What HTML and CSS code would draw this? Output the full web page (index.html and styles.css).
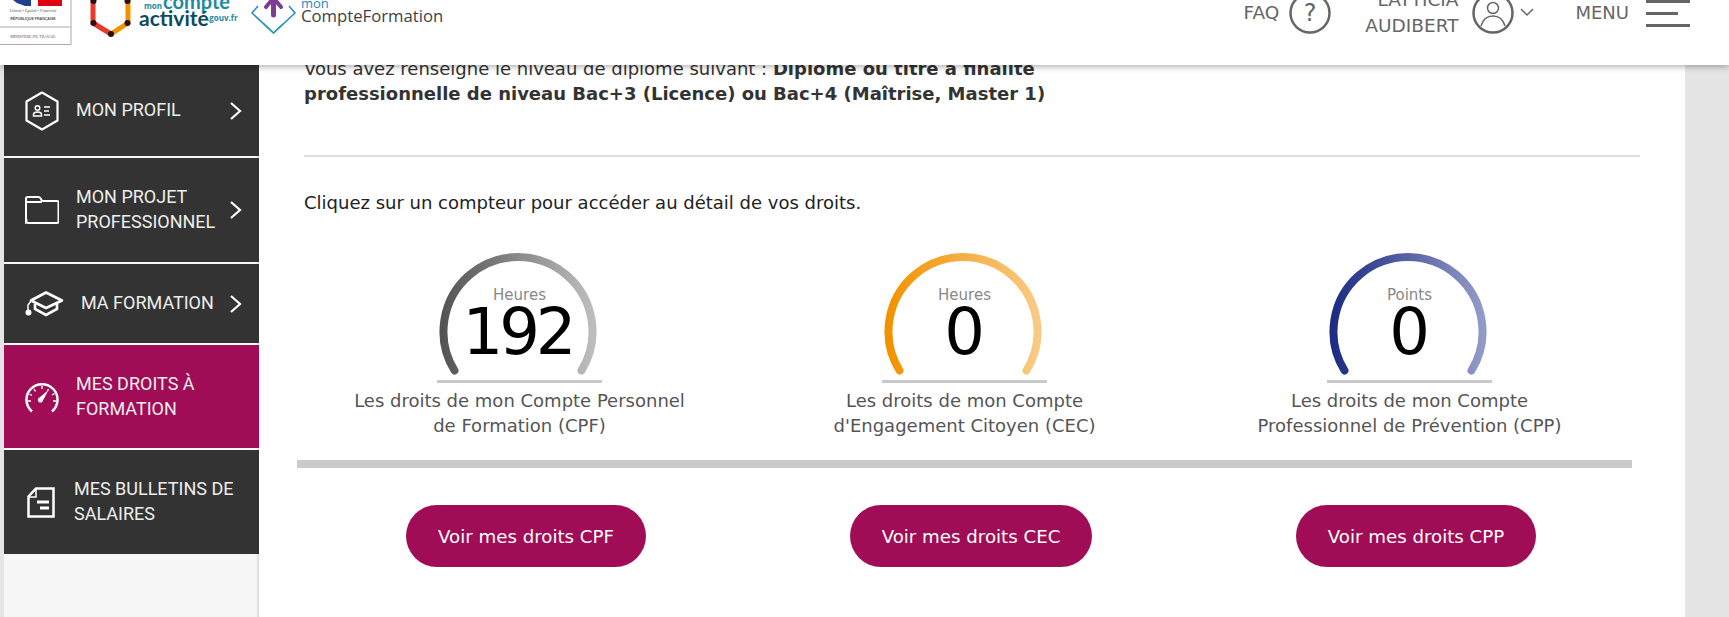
FILE: index.html
```html
<!DOCTYPE html>
<html lang="fr">
	<head>
		<title>Mes droits à formation</title>
		<link rel="stylesheet" href="styles.css">
	</head>
	<body>
		<header class="top-bar">
			<svg class="logo-strip" width="480" height="65" viewBox="0 0 480 65">
				<path d="M5 0h26v6h-26z" fill="#1f3f8f"/>
				<path d="M5 0h8l4 3 8 3h-20z" fill="#fff"/>
				<path d="M38 0h24v6h-24z" fill="#e1000f"/>
				<path d="M0 27h71M71 0v44.500M0 44.500h71" stroke="#aaa" fill="none"/>
				<text x="33" y="12" class="tiny tiny-italic">Liberté • Égalité • Fraternité</text>
				<text x="33" y="20" class="tiny tiny-bold">RÉPUBLIQUE FRANÇAISE</text>
				<text x="33" y="38" class="tiny">MINISTÈRE DU TRAVAIL</text>

				<path d="M93 0v23l18 11" fill="none" stroke="#e8392b" stroke-width="5"/>
				<path d="M111 34l17-11v-23" fill="none" stroke="#f39200" stroke-width="5"/>
				<circle cx="93.500" cy="23" r="3" fill="#2a0f12"/>
				<circle cx="111" cy="34" r="3" fill="#2a0f12"/>
				<circle cx="127.500" cy="23" r="3" fill="#2a0f12"/>
				<circle cx="93.500" cy="1" r="3" fill="#2a0f12"/>
				<circle cx="127.500" cy="1" r="3" fill="#2a0f12"/>
				<text x="144" y="9" class="act-small">mon</text>
				<text x="163" y="9" class="act-big">compte</text>
				<text x="139" y="26" class="act-dark">activité</text>
				<text x="207" y="21" class="act-gouv">.gouv.fr</text>

				<path d="M258 6l-6 7 21.500 20 21.500-20-6-7" fill="none" stroke="#2a86c4" stroke-width="1.500"/>
				<path d="M264 24l9.500 9 9.500-9" fill="none" stroke="#1fa59b" stroke-width="1.500"/>
				<path d="M273.500 0v15" stroke="#7b3d91" stroke-width="5" stroke-linecap="round"/>
				<path d="M266 7l5-6M281 7l-5-6" stroke="#7b3d91" stroke-width="4" stroke-linecap="round"/>
				<text x="301" y="8" class="cf-mon">mon</text>
				<text x="301" y="22" class="cf-name">CompteFormation</text>
			</svg>

			<div class="top-actions">
				<span class="top-link faq-link">FAQ</span>
				<svg class="round-icon" width="42" height="42" viewBox="0 0 42 42">
					<circle cx="21" cy="21" r="19.500" fill="none" stroke="#666" stroke-width="2.500"/>
					<text x="21" y="29" class="help-mark">?</text>
				</svg>
				<span class="top-link user-name">LAYTICIA<br>AUDIBERT</span>
				<svg class="round-icon" width="42" height="42" viewBox="0 0 42 42">
					<circle cx="21" cy="21" r="19.500" fill="none" stroke="#666" stroke-width="2.500"/>
					<circle cx="21" cy="16" r="5.500" fill="none" stroke="#666" stroke-width="1.500"/>
					<path d="M9 34c2-7 7-10 12-10s10 3 12 10" fill="none" stroke="#666" stroke-width="1.500"/>
				</svg>
				<svg class="down-icon" width="16" height="10" viewBox="0 0 16 10">
					<path d="M2 2l6 6 6-6" fill="none" stroke="#666" stroke-width="1.500"/>
				</svg>
				<span class="top-link menu-link">MENU</span>
				<div class="burger">
					<span></span>
					<span class="short"></span>
					<span></span>
				</div>
			</div>
		</header>

		<div class="page">
			<nav class="sidebar">
				<a class="side-item item-profil">
					<span class="side-icon">
						<svg width="34" height="40" viewBox="0 0 34 40">
							<path d="M17 1.500l15.500 9v19l-15.500 9-15.500-9v-19z" fill="none" stroke="#fff" stroke-width="2.200" stroke-linejoin="round"/>
							<circle cx="12.500" cy="17" r="2.300" fill="none" stroke="#fff" stroke-width="1.500"/>
							<path d="M8.500 25v-1.500c0-1.500 2-2.500 4-2.500s4 1 4 2.500v1.500z" fill="none" stroke="#fff" stroke-width="1.500"/>
							<path d="M19 16h6M19 20h5M19 24h6" stroke="#fff" stroke-width="1.300"/>
						</svg>
					</span>
					<span class="side-text">MON PROFIL</span>
					<svg class="side-arrow" width="13" height="20" viewBox="0 0 13 20"><path d="M2 2l9 8-9 8" fill="none" stroke="#fff" stroke-width="2.200"/></svg>
				</a>
				<a class="side-item item-projet">
					<span class="side-icon">
						<svg width="34" height="28" viewBox="0 0 34 28">
							<path d="M1 26V2.500q0-1.500 1.500-1.500h11q1.500 0 2.500 2l1 2h15q1.500 0 1.500 1.500v19q0 1.500-1.500 1.500h-29q-1.500 0-1.500-1.500z M1 6h16" fill="none" stroke="#fff" stroke-width="2"/>
						</svg>
					</span>
					<span class="side-text">MON PROJET<br>PROFESSIONNEL</span>
					<svg class="side-arrow" width="13" height="20" viewBox="0 0 13 20"><path d="M2 2l9 8-9 8" fill="none" stroke="#fff" stroke-width="2.200"/></svg>
				</a>
				<a class="side-item item-formation">
					<span class="side-icon icon-wide">
						<svg width="40" height="26" viewBox="0 0 40 26">
							<path d="M21 1.500l16 8-16 7.500-15-7.500z" fill="none" stroke="#fff" stroke-width="2.600" stroke-linejoin="round"/>
							<path d="M10 13v5l11 6 11-6v-5" fill="none" stroke="#fff" stroke-width="2.600"/>
							<path d="M6 10L3 14v6" fill="none" stroke="#fff" stroke-width="1.500"/>
							<circle cx="3.500" cy="21.500" r="3" fill="#fff"/>
						</svg>
					</span>
					<span class="side-text">MA FORMATION</span>
					<svg class="side-arrow" width="13" height="20" viewBox="0 0 13 20"><path d="M2 2l9 8-9 8" fill="none" stroke="#fff" stroke-width="2.200"/></svg>
				</a>
				<a class="side-item item-droits active">
					<span class="side-icon">
						<svg width="34" height="32" viewBox="0 0 34 32">
							<path d="M7 30.500A15.500 15.500 0 1 1 27 30.500" fill="none" stroke="#fff" stroke-width="2.500"/>
							<path d="M17 5v3M9 8l1.500 2.500M4.500 13l2.500 1.500M3 20h3M28 20h3M27 14l2.500-1.500M23.500 8l-1 2" stroke="#fff" stroke-width="1.300"/>
							<path d="M14.500 16.500l9-7.500-5.500 10.500a2.600 2.600 0 1 1-3.500-3z" fill="#fff"/>
						</svg>
					</span>
					<span class="side-text">MES DROITS À<br>FORMATION</span>
				</a>
				<a class="side-item item-salaires">
					<span class="side-icon icon-narrow">
						<svg width="28" height="31" viewBox="0 0 28 31">
							<path d="M9 1.500h17.500v28h-25v-20z" fill="none" stroke="#fff" stroke-width="2.500"/>
							<path d="M9 2v8h-7" fill="none" stroke="#fff" stroke-width="1.500"/>
							<path d="M10 15h12M13 21h9" stroke="#fff" stroke-width="3"/>
						</svg>
					</span>
					<span class="side-text">MES BULLETINS DE<br>SALAIRES</span>
				</a>
			</nav>

			<main class="content">
				<p class="diploma">Vous avez renseigné le niveau de diplôme suivant : <strong>Diplôme ou titre à finalité<br>professionnelle de niveau Bac+3 (Licence) ou Bac+4 (Maîtrise, Master 1)</strong></p>
				<hr class="separator">
				<p class="intro">Cliquez sur un compteur pour accéder au détail de vos droits.</p>

				<div class="counters">
					<div class="counter">
						<div class="gauge">
							<svg class="gauge-arc" width="160" height="125" viewBox="0 0 160 125">
								<defs>
									<linearGradient id="grad-cpf"><stop offset="0" stop-color="#555"/><stop offset="1" stop-color="#bdbdbd"/></linearGradient>
								</defs>
								<path d="M16.500 119.500A74.500 74.500 0 1 1 143.500 119.500" fill="none" stroke="url(#grad-cpf)" stroke-width="8" stroke-linecap="round"/>
							</svg>
							<span class="gauge-unit">Heures</span>
							<span class="gauge-value">192</span>
						</div>
						<p class="counter-label">Les droits de mon Compte Personnel<br>de Formation (CPF)</p>
					</div>
					<div class="counter">
						<div class="gauge">
							<svg class="gauge-arc" width="160" height="125" viewBox="0 0 160 125">
								<defs>
									<linearGradient id="grad-cec"><stop offset="0" stop-color="#f39200"/><stop offset="1" stop-color="#f9ca85"/></linearGradient>
								</defs>
								<path d="M16.500 119.500A74.500 74.500 0 1 1 143.500 119.500" fill="none" stroke="url(#grad-cec)" stroke-width="8" stroke-linecap="round"/>
							</svg>
							<span class="gauge-unit">Heures</span>
							<span class="gauge-value">0</span>
						</div>
						<p class="counter-label">Les droits de mon Compte<br>d'Engagement Citoyen (CEC)</p>
					</div>
					<div class="counter">
						<div class="gauge">
							<svg class="gauge-arc" width="160" height="125" viewBox="0 0 160 125">
								<defs>
									<linearGradient id="grad-cpp"><stop offset="0" stop-color="#1d2d84"/><stop offset="1" stop-color="#929ac6"/></linearGradient>
								</defs>
								<path d="M16.500 119.500A74.500 74.500 0 1 1 143.500 119.500" fill="none" stroke="url(#grad-cpp)" stroke-width="8" stroke-linecap="round"/>
							</svg>
							<span class="gauge-unit">Points</span>
							<span class="gauge-value">0</span>
						</div>
						<p class="counter-label">Les droits de mon Compte<br>Professionnel de Prévention (CPP)</p>
					</div>
				</div>

				<div class="actions">
					<div class="action-cell"><a class="pill-button">Voir mes droits CPF</a></div>
					<div class="action-cell"><a class="pill-button">Voir mes droits CEC</a></div>
					<div class="action-cell"><a class="pill-button">Voir mes droits CPP</a></div>
				</div>
			</main>
		</div>
	</body>
</html>
```

FILE: styles.css
```css
html, body {
	margin: 0;
	height: 617px;
	overflow: hidden;
}
body {
	font-family: "DejaVu Sans", Verdana, sans-serif;
	background-color: #e5e5e5;
	color: #333;
}
.top-bar {
	position: relative;
	z-index: 2;
	height: 65px;
	background: white;
	box-shadow: 0px 2px 6px rgba(0, 0, 0, 0.3);
	display: flex;
	justify-content: space-between;
	overflow: hidden;
	clip-path: inset(0 0 -10px 0);
}
.logo-strip {
	display: block;
	flex: none;
}
	.tiny {
		font-family: "Liberation Serif", serif;
		font-size: 4px;
		fill: #555;
		text-anchor: middle;
	}
	.tiny-italic {
		font-style: italic;
	}
	.tiny-bold {
		font-family: "Liberation Sans", sans-serif;
		font-weight: bold;
		font-size: 3.6px;
	}
	.act-small {
		font-family: "Open Sans", sans-serif;
		font-size: 8px;
		font-weight: bold;
		fill: #1d8a9e;
	}
	.act-big {
		font-family: "Lato", sans-serif;
		font-size: 20px;
		font-weight: bold;
		fill: #1d8a9e;
	}
	.act-dark {
		font-family: "Lato", sans-serif;
		font-size: 21px;
		font-weight: bold;
		fill: #0c4a60;
	}
	.act-gouv {
		font-family: "Open Sans", sans-serif;
		font-size: 8px;
		font-weight: bold;
		fill: #1d8a9e;
	}
	.cf-mon {
		font-family: "Open Sans", sans-serif;
		font-size: 13px;
		fill: #2a86c4;
	}
	.cf-name {
		font-family: "Open Sans", sans-serif;
		font-size: 16.700px;
		fill: #3c4246;
	}
.top-actions {
	display: flex;
	align-items: flex-start;
	padding-right: 39px;
	color: #666;
	font-size: 18.500px;
	margin-top: -8px;
}
	.top-link {
		line-height: 26px;
	}
	.faq-link {
		margin-top: 8px;
	}
	.round-icon {
		display: block;
	}
	.top-actions .round-icon {
		margin-left: 10px;
	}
	.user-name {
		text-align: right;
		margin-left: 34px;
		margin-top: -5px;
	}
	.user-name + .round-icon {
		margin-left: 14px;
	}
	.down-icon {
		margin-left: 5px;
		margin-top: 15px;
	}
	.menu-link {
		margin-left: 40px;
		margin-top: 8px;
		font-size: 18px;
	}
	.burger {
		width: 44px;
		margin-left: 17px;
		display: flex;
		flex-direction: column;
		gap: 9px;
		margin-top: 8px;
	}
	.burger span {
		display: block;
		height: 3px;
		background-color: #666;
	}
	.burger .short {
		width: 32px;
	}
.page {
	display: flex;
	margin-left: 4px;
	width: 1681px;
	height: 552px;
}
.sidebar {
	width: 255px;
	flex: none;
	background-color: #f7f7f7;
	box-shadow: inset -3px 0px 3px -2px #ccc;
	display: flex;
	flex-direction: column;
	gap: 2px;
}
	.side-item {
		display: flex;
		align-items: center;
		flex: none;
		padding: 0 17px 0 21px;
		background-color: #333;
		color: #eee;
		font-family: Roboto, sans-serif;
		font-size: 18px;
		line-height: 25px;
	}
	.side-text {
		padding-bottom: 2px;
	}
	.item-profil {
		height: 91px;
	}
	.item-projet {
		height: 104px;
	}
	.item-formation {
		height: 79px;
	}
	.item-droits {
		height: 103px;
	}
	.item-salaires {
		height: 104px;
	}
	.active {
		background-color: #a00d56;
	}
	.side-icon {
		width: 51px;
		flex: none;
		display: flex;
	}
	.icon-wide {
		width: 56px;
	}
	.icon-narrow {
		width: 49px;
		padding-left: 2px;
		box-sizing: border-box;
	}
	.side-arrow {
		margin-left: auto;
		flex: none;
	}
.content {
	flex: 1;
	background: white;
	margin-top: -9px;
	padding: 0 45px;
	font-size: 18px;
	line-height: 25px;
}
	.diploma {
		margin: 0;
		color: #333;
	}
	.separator {
		border: none;
		height: 2px;
		background-color: #ddd;
		margin: 49px 0 0 0;
	}
	.intro {
		margin: 33px 0 0 0;
		color: #222;
	}
	.counters {
		display: grid;
		grid-template-columns: repeat(3, 445px);
		width: 1335px;
		margin: 37px 0 0 -7px;
		padding-bottom: 22px;
		border-bottom: 8px solid #cacaca;
	}
	.counter {
		display: flex;
		flex-direction: column;
		align-items: center;
	}
	.gauge {
		position: relative;
		width: 165px;
		height: 128px;
		border-bottom: 3px solid #cacaca;
		display: flex;
		flex-direction: column;
		align-items: center;
		box-sizing: content-box;
	}
	.gauge-arc {
		position: absolute;
		left: 1px;
		top: -1px;
	}
	.gauge-unit {
		margin-top: 34px;
		font-size: 15px;
		line-height: 18px;
		color: #888;
	}
	.gauge-value {
		font-size: 64px;
		line-height: 56px;
		margin-right: 4px;
		color: #000;
		letter-spacing: -4px;
	}
	.counter-label {
		margin: 5px 0 0 0;
		text-align: center;
		color: #555;
		white-space: nowrap;
	}
	.actions {
		display: grid;
		grid-template-columns: repeat(3, 445px);
		margin: 37px 0 0 -7px;
	}
	.action-cell {
		display: flex;
		justify-content: center;
		padding-left: 13px;
	}
	.pill-button {
		display: flex;
		align-items: center;
		justify-content: center;
		height: 62px;
		padding: 0 32px;
		border-radius: 31px;
		background-color: #a00d56;
		color: white;
		font-size: 18.200px;
	}
	.help-mark {
		font-family: "DejaVu Sans", sans-serif;
		font-size: 24px;
		fill: #666;
		text-anchor: middle;
	}
```
